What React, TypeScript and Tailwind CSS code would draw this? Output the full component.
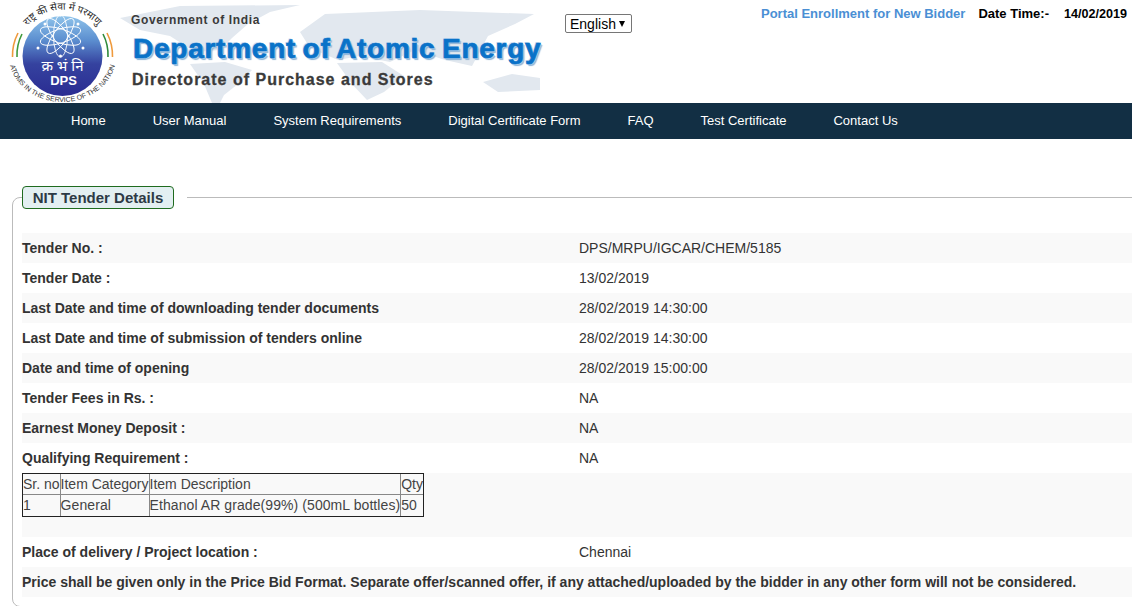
const rows: [string, string][] = [
  ["Tender No. :", "DPS/MRPU/IGCAR/CHEM/5185"],
  ["Tender Date :", "13/02/2019"],
  ["Last Date and time of downloading tender documents", "28/02/2019 14:30:00"],
  ["Last Date and time of submission of tenders online", "28/02/2019 14:30:00"],
  ["Date and time of opening", "28/02/2019 15:00:00"],
  ["Tender Fees in Rs. :", "NA"],
  ["Earnest Money Deposit :", "NA"],
  ["Qualifying Requirement :", "NA"],
];
const nav = ["Home", "User Manual", "System Requirements", "Digital Certificate Form", "FAQ", "Test Certificate", "Contact Us"];

function Logo() {
  const spokes = [0, 36, 72, 108, 144];
  return (
    <svg width="115" height="101" viewBox="5 2 115 101" className="block shrink-0">
      <defs>
        <linearGradient id="disc" x1="0" y1="0" x2="0" y2="1">
          <stop offset="0" stopColor="#8fc3ea" />
          <stop offset="0.3" stopColor="#5c8fd0" />
          <stop offset="0.6" stopColor="#35429f" />
          <stop offset="1" stopColor="#2a2c92" />
        </linearGradient>
        <path id="topArc" d="M18 44 A 46 46 0 0 1 107 44" />
        <path id="botArc" d="M9 56 A 53.5 46 0 0 0 116 56" />
      </defs>
      <circle cx="62.5" cy="56" r="40" fill="url(#disc)" />
      <g fill="none" stroke="#fff" strokeWidth="0.9" transform="translate(60.5 36)">
        {spokes.map((a) => (
          <ellipse key={a} rx="7" ry="21" transform={`rotate(${a})`} />
        ))}
      </g>
      <g fill="#fff">
        {[[38, 48], [83, 48], [45, 24], [78, 24], [60.5, 15], [60.5, 56]].map(([x, y]) => (
          <circle key={x * 100 + y} cx={x} cy={y} r="1.5" />
        ))}
      </g>
      <path d="M12.5 57 A 50 50 0 0 1 18 33" fill="none" stroke="#ef9a3c" strokeWidth="1.6" />
      <path d="M17 57 A 46 46 0 0 1 22 34" fill="none" stroke="#3f9a3c" strokeWidth="1.6" />
      <path d="M112.5 57 A 50 50 0 0 0 107 33" fill="none" stroke="#ef9a3c" strokeWidth="1.6" />
      <path d="M108 57 A 46 46 0 0 0 103 34" fill="none" stroke="#2f8a3a" strokeWidth="1.6" />
      <text fontSize="10" fill="#2a2a2a" fontFamily="'Noto Sans','DejaVu Sans',sans-serif">
        <textPath href="#topArc" startOffset="50%" textAnchor="middle">राष्ट्र की सेवा में परमाणु</textPath>
      </text>
      <text fontSize="7" fill="#333" fontFamily="'Liberation Sans',sans-serif">
        <textPath href="#botArc" startOffset="50%" textAnchor="middle">ATOMS IN THE SERVICE OF THE NATION</textPath>
      </text>
      <text x="62.5" y="71" textAnchor="middle" fontSize="15" fill="#fff" fontFamily="'Noto Sans','DejaVu Sans',sans-serif">क्र भं नि</text>
      <text x="63.5" y="85" textAnchor="middle" fontSize="13" fontWeight="700" fill="#fff" fontFamily="'Liberation Sans',sans-serif">DPS</text>
    </svg>
  );
}

function WorldMap() {
  return (
    <svg width="425" height="103" viewBox="0 0 425 103" className="absolute left-[120px] top-0" fill="#e2e8ef">
      <path d="M0 18 L60 6 L180 5 L150 12 L128 24 L112 38 L100 50 L75 52 L50 36 L20 30Z" />
      <path d="M70 64 L105 62 L132 70 L118 84 L104 95 L100 103 L92 103 L84 84Z" />
      <path d="M180 32 L205 14 L300 10 L414 14 L395 24 L368 36 L352 66 L325 60 L295 50 L270 62 L240 56 L218 60 L190 48Z" />
      <path d="M217 63 L262 62 L284 76 L264 92 L247 100 L232 84Z" />
      <path d="M363 82 L392 74 L420 78 L420 90 L378 92Z" />
    </svg>
  );
}

function Cell({ text, last, bottom, wide }: { text: string; last: boolean; bottom: boolean; wide?: boolean }) {
  return (
    <td className={`p-0 h-[21px] align-top border-[#888] ${last ? "" : "border-r"} ${bottom ? "border-b" : ""} ${wide ? "tracking-[0.08px]" : ""}`}>
      {text}
    </td>
  );
}

export default function App() {
  const head = ["Sr. no", "Item Category", "Item Description", "Qty"];
  const body = ["1", "General", "Ethanol AR grade(99%) (500mL bottles)", "50"];
  return (
    <div className="w-[1132px] h-[606px] overflow-hidden bg-white font-['Liberation_Sans',Arial,sans-serif] text-[14px] text-[#333]">
      <header className="relative h-[103px] flex">
        <WorldMap />
        <div className="relative pl-[5px] pt-[2px] w-[131px]"><Logo /></div>
        <div className="relative pt-[12px] w-[434px] text-[#3a3a3a]">
          <div className="text-[12px] font-bold leading-[16px] tracking-[0.65px]">Government of India</div>
          <div className="mt-[3px] ml-[2px] text-[28px] leading-[36px] font-bold text-[#0a72c8] tracking-[0.75px] [word-spacing:-2px] whitespace-nowrap [-webkit-text-stroke:0.7px_#0a72c8] [text-shadow:1px_1px_0_#a9cdec,-1px_-1px_0_#cfe2f3,2px_2px_1px_#8fb4d6]">Department of Atomic Energy</div>
          <div className="mt-[2px] ml-[1px] text-[16px] leading-[22px] font-bold tracking-[1px] whitespace-nowrap [-webkit-text-stroke:0.3px_#3a3a3a]">Directorate of Purchase and Stores</div>
        </div>
        <div className="relative pt-[14px]">
          <div className="w-[67px] h-[19px] border border-[#767676] rounded-[2px] bg-white flex items-center justify-between pl-[4px] pr-[6px] text-black leading-none">
            <span>English</span>
            <svg width="6" height="6" viewBox="0 0 6 6" className="block"><path d="M0 0H6L3 6Z" fill="#000" /></svg>
          </div>
        </div>
        <div className="relative ml-auto pt-[6px] pr-[5px] flex text-[13px] font-bold leading-[16px] whitespace-nowrap">
          <span className="text-[#4a8fd4]">Portal Enrollment for New Bidder</span>
          <span className="ml-[13px] text-black">Date Time:-</span>
          <span className="ml-[15px] text-black text-[12.6px]">14/02/2019</span>
        </div>
      </header>
      <nav className="h-[36px] bg-[#122f44] flex items-center pl-[47.5px] text-white text-[13px] leading-[36px]">
        {nav.map((n) => (
          <span key={n} className="px-[23.5px] whitespace-nowrap">{n}</span>
        ))}
      </nav>
      <fieldset className="mt-[47px] ml-[12px] w-[1130px] border border-[#bbb] rounded-[8px] pl-[9px] h-[421px]">
        <legend className="pr-[13px]">
          <div className="h-[23px] w-[152px] flex items-center justify-center border border-[#1f6b1f] rounded-[4px] bg-[#e3eff1] text-[#2d3a45] font-bold text-[15px] leading-[21px]">NIT Tender Details</div>
        </legend>
        <div className="pt-[24px]">
          {rows.map(([l, v], i) => (
            <div key={l} className={`h-[30px] flex items-center ${i % 2 === 0 ? "bg-[#f9f9f9]" : ""}`}>
              <div className="w-[557px] font-bold">{l}</div>
              <div>{v}</div>
            </div>
          ))}
          <div className="h-[64px] bg-[#f9f9f9]">
            <table className="border-separate border-spacing-0 border border-[#222] text-[14px] text-[#444] leading-[20px]">
              <tbody>
                <tr>
                  {head.map((t, i) => (
                    <Cell key={t} text={t} last={i === 3} bottom />
                  ))}
                </tr>
                <tr>
                  {body.map((t, i) => (
                    <Cell key={t} text={t} last={i === 3} bottom={false} wide />
                  ))}
                </tr>
              </tbody>
            </table>
          </div>
          <div className="h-[30px] flex items-center">
            <div className="w-[557px] font-bold">Place of delivery / Project location :</div>
            <div>Chennai</div>
          </div>
          <div className="h-[30px] flex items-center bg-[#f9f9f9] font-bold">
            Price shall be given only in the Price Bid Format. Separate offer/scanned offer, if any attached/uploaded by the bidder in any other form will not be considered.
          </div>
        </div>
      </fieldset>
    </div>
  );
}
